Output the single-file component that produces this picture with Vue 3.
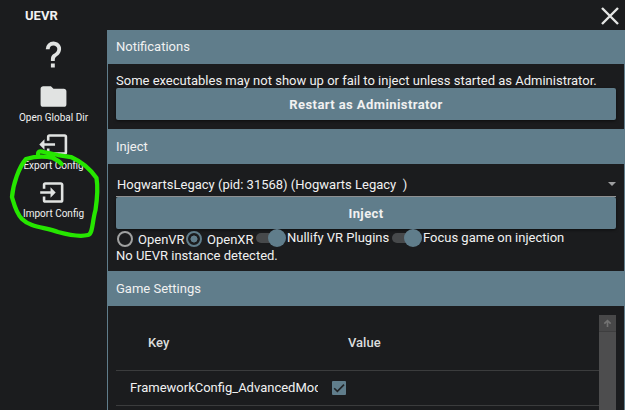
<script setup>
import { ref } from 'vue'

const actions = [
  { label: '', d: 'M10,19H13V22H10V19M12,2C17.35,2.22 19.68,7.62 16.5,11.67C15.67,12.67 14.33,13.33 13.67,14.17C13,15 13,16 13,17H10C10,15.33 10,13.92 10.67,12.92C11.33,11.92 12.67,11.33 13.5,10.67C15.92,8.43 15.32,5.26 12,5A3,3 0 0,0 9,8H6A6,6 0 0,1 12,2Z', kind: 'help' },
  { label: 'Open Global Dir', d: 'M10,4H4C2.89,4 2,4.89 2,6V18A2,2 0 0,0 4,20H20A2,2 0 0,0 22,18V8C22,6.89 21.1,6 20,6H12L10,4Z', kind: 'dir' },
  { label: 'Export Config', d: 'M1,12L5,8V11H13.2V13H5V16M6.9,9V6A2,2 0 0,1 8.9,4H20.6A2,2 0 0,1 22.6,6V18A2,2 0 0,1 20.6,20H8.9A2,2 0 0,1 6.9,18V15H8.9V18H20.6V6H8.9V9Z', kind: 'export' },
  { label: 'Import Config', d: 'M13.7,12L9.7,8V11H1.7V13H9.7V16M19.7,18V6C19.7,4.89 18.8,4 17.7,4H5.7A2,2 0 0,0 3.7,6V9H5.7V6H17.7V18H5.7V15H3.7V18A2,2 0 0,0 5.7,20H17.7A2,2 0 0,0 19.7,18Z', kind: 'import' },
]
const runtime = ref('OpenXR')
const toggles = ['Nullify VR Plugins', 'Focus game on injection']
</script>

<template>
  <div class="window">
    <header class="titlebar">
      <span class="title">UEVR</span>
      <svg class="close" viewBox="0 0 18 18"><path d="M1 1L17 17M17 1L1 17" /></svg>
    </header>
    <div class="body">
      <nav class="side">
        <div v-for="a in actions" :key="a.kind" class="action" :class="a.kind">
          <svg class="icon" viewBox="0 0 24 24"><path :d="a.d" /></svg>
          <span v-if="a.label" class="label">{{ a.label }}</span>
        </div>
      </nav>
      <main class="panels">
        <section class="card notifications">
          <h2>Notifications</h2>
          <div class="content">
            <p class="notice">Some executables may not show up or fail to inject unless started as Administrator.</p>
            <button class="raised">Restart as Administrator</button>
          </div>
        </section>
        <section class="card inject">
          <h2>Inject</h2>
          <div class="content">
            <div class="select"><span>HogwartsLegacy (pid: 31568) (Hogwarts Legacy&nbsp; )</span><i class="caret"></i></div>
            <button class="raised">Inject</button>
            <div class="options">
              <span v-for="r in ['OpenVR', 'OpenXR']" :key="r" class="radio" :class="{ on: runtime === r }" @click="runtime = r">
                <i class="ring"></i><span class="name">{{ r }}</span>
              </span>
              <span v-for="t in toggles" :key="t" class="toggle"><i class="track"><i class="thumb"></i></i><span class="caption">{{ t }}</span></span>
            </div>
            <p class="status">No UEVR instance detected.</p>
          </div>
        </section>
        <section class="card settings">
          <h2>Game Settings</h2>
          <div class="content grid">
            <div class="table">
              <div class="row head"><span>Key</span><span>Value</span></div>
              <div class="row">
                <span class="key">FrameworkConfig_AdvancedMod</span>
                <i class="check"><svg viewBox="0 0 14 14"><path d="M2.2 7.2L5.4 10.4L12 3.6" /></svg></i>
              </div>
            </div>
            <div class="scroll"><div class="up"><svg viewBox="0 0 10 10"><path d="M5 9V2M1.5 5.2L5 1.7L8.5 5.2" /></svg></div></div>
          </div>
        </section>
      </main>
    </div>
    <svg class="scribble" viewBox="0 0 110 100">
      <path d="M38 14.5C38 11 40 11 44 12L58 15L71 17C82 22 91 30 96.5 38C98 47 97 60 95.5 70C92 82 93 94 88 95C80 97 69 95 58 92C46 87 31 88 22 79C16 73 14 64 12 57C13 44 19 27 26 19C36 16 45 16 53 18C57 20 60 22 61.5 24" />
    </svg>
  </div>
</template>

<style>
html, body { margin: 0; background: #1b1c1e; overflow: hidden; }
</style>
<style scoped>
* { box-sizing: border-box; }
.window { position: relative; width: 625px; height: 410px; overflow: hidden; background: #1b1c1e; color: #f1f1f1; font: 13px/16px Roboto, sans-serif; }
.titlebar { height: 30px; display: flex; justify-content: space-between; padding: 8px 6px 0 25px; }
.title { font-weight: 700; font-size: 13px; }
.close { width: 18px; height: 18px; margin-top: -1px; fill: none; stroke: #e5e6e5; stroke-width: 2.4; }
.body { display: flex; height: 380px; }
.side { width: 107px; padding-top: 9px; }
.action { height: 48px; display: flex; flex-direction: column; align-items: center; }
.action.help { height: 42px; }
.icon { width: 31px; height: 31px; fill: #e1e3e2; flex: none; }
.label { font-size: 10px; line-height: 12px; white-space: nowrap; }
.panels { width: 518px; }
.card { border: 1px solid #607d8b; border-top: 0; }
h2 { margin: 0 -1px; height: 34px; padding: 1px 9px 0; background: #607d8b; font-size: 13px; line-height: 32px; font-weight: 400; }
.content { padding: 0 8px; }
p { margin: 0; white-space: nowrap; }
.notifications { height: 100px; }
.notice { padding-top: 9px; height: 24px; }
.raised { display: block; width: 500px; height: 32px; border: 0; border-radius: 2px; padding: 2px 0 0; background: #607d8b; color: #f1f1f1; font: 700 13px/20px Roboto, sans-serif; letter-spacing: .42px; box-shadow: 0 1px 3px #0008; }
.inject { height: 142px; }
.select { height: 33px; display: flex; justify-content: space-between; align-items: flex-start; padding: 13px 0 0 1px; border-bottom: 1px solid #9b9c9d; }
.caret { border: 4px solid transparent; border-top-color: #9d9ea0; border-bottom: 0; margin-top: 5px; }
.options { display: flex; height: 18px; }
.radio { display: flex; width: 69px; padding: 2px 0 0 1px; }
.ring { width: 16px; height: 16px; border: 2px solid #a0a1a1; border-radius: 50%; display: block; flex: none; }
.on .ring { border-color: #607d8b; background: radial-gradient(circle, #607d8b 3.2px, transparent 3.8px); }
.name { margin: 1px 0 0 5px; }
.toggle { display: flex; white-space: nowrap; width: 136px; padding-left: 2px; }
.track { flex: none; position: relative; width: 22px; height: 10px; border-radius: 5px; background: #47494b; margin: 4px 9px 0 0; }
.thumb { position: absolute; left: 12px; top: -4px; width: 18px; height: 18px; border-radius: 50%; background: #607d8b; }
.caption { padding-top: 1px; }
.status { padding-top: 1px; }
.settings { height: 150px; }
.grid { display: flex; padding-top: 9px; }
.table { width: 483px; }
.row { height: 35px; display: flex; align-items: center; border-bottom: 1px solid #3b3c3d; padding-left: 14px; }
.row.head { height: 56px; padding-left: 32px; font-weight: 500; color: #dcdddd; }
.head span { width: 200px; }
.key { width: 188px; overflow: hidden; white-space: nowrap; }
.check { margin-left: 14px; width: 14px; height: 14px; background: #607d8b; border-radius: 1px; }
svg { display: block; }
.check path { fill: none; stroke: #202326; stroke-width: 1.6; }
.scroll { width: 17px; height: 100px; background: #4d4d4e; }
.up { height: 17px; padding: 4px; background: #484849; border-bottom: 1px solid #3e3e3f; }
.up path { fill: none; stroke: #737373; stroke-width: 1.8; }
.scribble { position: absolute; left: 0; top: 140px; width: 110px; height: 100px; fill: none; stroke: #26e600; stroke-width: 4.3; stroke-linecap: round; stroke-linejoin: round; }
</style>
